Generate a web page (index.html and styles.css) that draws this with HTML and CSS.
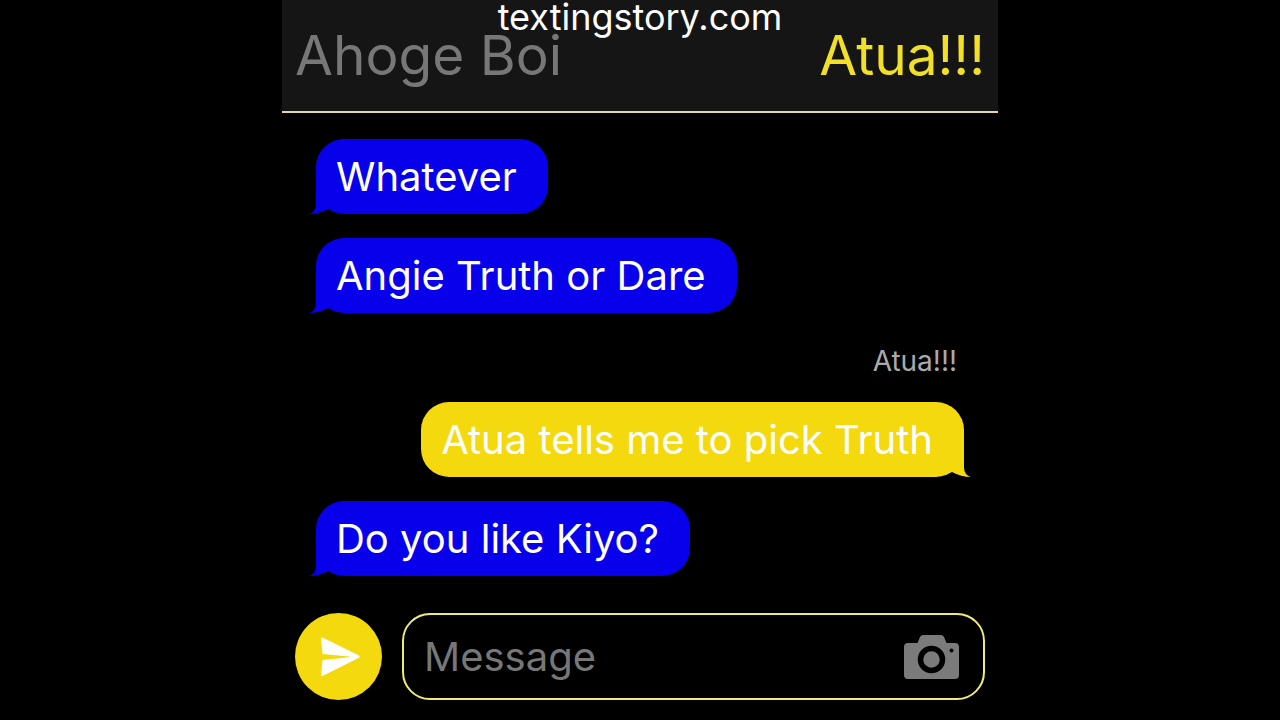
FILE: index.html
```
<!DOCTYPE html>
<html lang="en">
<head>
  <meta charset="UTF-8">
  <meta name="viewport" content="width=device-width, initial-scale=1.0">
  <title>Ahoge Boi</title>
  <link rel="stylesheet" href="styles.css">
</head>
<body>

  <div class="chat">
    <header class="chat-header">
      <h1 class="contact">Ahoge Boi</h1>
      <span class="me">Atua!!!</span>
      <a class="watermark" href="#">textingstory.com</a>
    </header>

    <main class="messages">
      <p class="bubble received">Whatever</p>
      <p class="bubble received">Angie Truth or Dare</p>
      <p class="sender">Atua!!!</p>
      <p class="bubble sent">Atua tells me to pick Truth</p>
      <p class="bubble received">Do you like Kiyo?</p>
    </main>

    <form class="composer">
      <button class="send-btn" type="button" aria-label="Send">
        <svg width="87" height="87" viewBox="0 0 87 87" fill="#fff">
          <path d="M26 25.5Q26 24 27.5 24.6L64 42.6Q65.5 43.7 64 44.8L27.5 63Q26 63.6 26 62L27.5 47L54 44.2L54 43.4L27.5 41Z"/>
        </svg>
      </button>
      <div class="message-box">
        <input class="message-input" type="text" placeholder="Message" aria-label="Message">
        <button class="camera-btn" type="button" aria-label="Camera">
          <svg width="56" height="44" viewBox="0 0 56 44">
            <path fill="#7b7b7b" d="M4 8H13.500L16 2Q16.800 0 19 0H37Q39.200 0 40 2L42.500 8H51Q55 8 55 12V40Q55 44 51 44H4Q0 44 0 40V12Q0 8 4 8Z"/>
            <circle cx="27.500" cy="24.500" r="11" fill="none" stroke="#000" stroke-width="5.500"/>
            <circle cx="47.500" cy="15.500" r="2" fill="#000"/>
          </svg>
        </button>
      </div>
    </form>
  </div>

</body>
</html>
```
FILE: styles.css
```
* {
  box-sizing: border-box;
}

body {
  margin: 0;
  background: #000;
  color: #fff;
  font-family: Inter, "Liberation Sans", sans-serif;
}

.chat {
  display: flex;
  flex-direction: column;
  max-width: 716px;
  min-height: 100vh;
  margin: 0 auto;
}

/* header */
.chat-header {
  position: relative;
  display: flex;
  justify-content: space-between;
  padding: 19px 13px 20px;
  background: #151515;
  border-bottom: 2px solid #e6d9a0;
  font-size: 55px;
  line-height: 72px;
}

.contact {
  margin: 0;
  color: #777;
  font-size: inherit;
  font-weight: 400;
}

.me {
  color: #f2df28;
}

.watermark {
  position: absolute;
  top: 0;
  left: 0;
  right: 0;
  color: #fff;
  font-size: 36px;
  line-height: 34px;
  text-align: center;
  text-decoration: none;
}

/* messages */
.messages {
  display: flex;
  flex: 1;
  flex-direction: column;
  align-items: flex-start;
  justify-content: flex-end;
  gap: 24px;
  padding: 24px 34px 37px;
}

.bubble {
  position: relative;
  margin: 0;
  padding: 13px 31px 12px 20px;
  border-radius: 28px;
  font-size: 40px;
  line-height: 50px;
}

.received {
  background: #0800ea;
}

.sent {
  align-self: flex-end;
  background: #f3d90d;
}

/* tail at the bottom corner */
.bubble::after {
  content: "";
  position: absolute;
  bottom: 0;
  left: -7px;
  width: 40px;
  height: 28px;
  background: inherit;
  clip-path: path("M7 0V18Q7 26 0 28Q10 28 19 23L35 10Z");
}

.sent::after {
  left: auto;
  right: -7px;
  transform: scaleX(-1);
}

.sender {
  align-self: flex-end;
  margin: 0;
  padding: 7px 7px 0 0;
  color: #aaa;
  font-size: 28px;
  line-height: 34px;
}

/* composer */
.composer {
  display: flex;
  gap: 20px;
  padding: 0 13px 20px;
}

.send-btn {
  flex-shrink: 0;
  width: 87px;
  height: 87px;
  padding: 0;
  border: none;
  border-radius: 50%;
  background: #f3d90d;
  cursor: pointer;
}

.send-btn svg,
.camera-btn svg {
  display: block;
}

.message-box {
  display: flex;
  flex: 1;
  align-items: center;
  min-width: 0;
  padding: 0 23px 0 20px;
  border: 2px solid #f0ea78;
  border-radius: 28px;
}

.message-input {
  flex: 1;
  min-width: 0;
  padding: 0;
  border: none;
  outline: none;
  background: transparent;
  color: #fff;
  font-family: inherit;
  font-size: 40px;
}

.message-input::placeholder {
  color: #777;
}

.camera-btn {
  padding: 0;
  border: none;
  background: none;
  cursor: pointer;
}
```
